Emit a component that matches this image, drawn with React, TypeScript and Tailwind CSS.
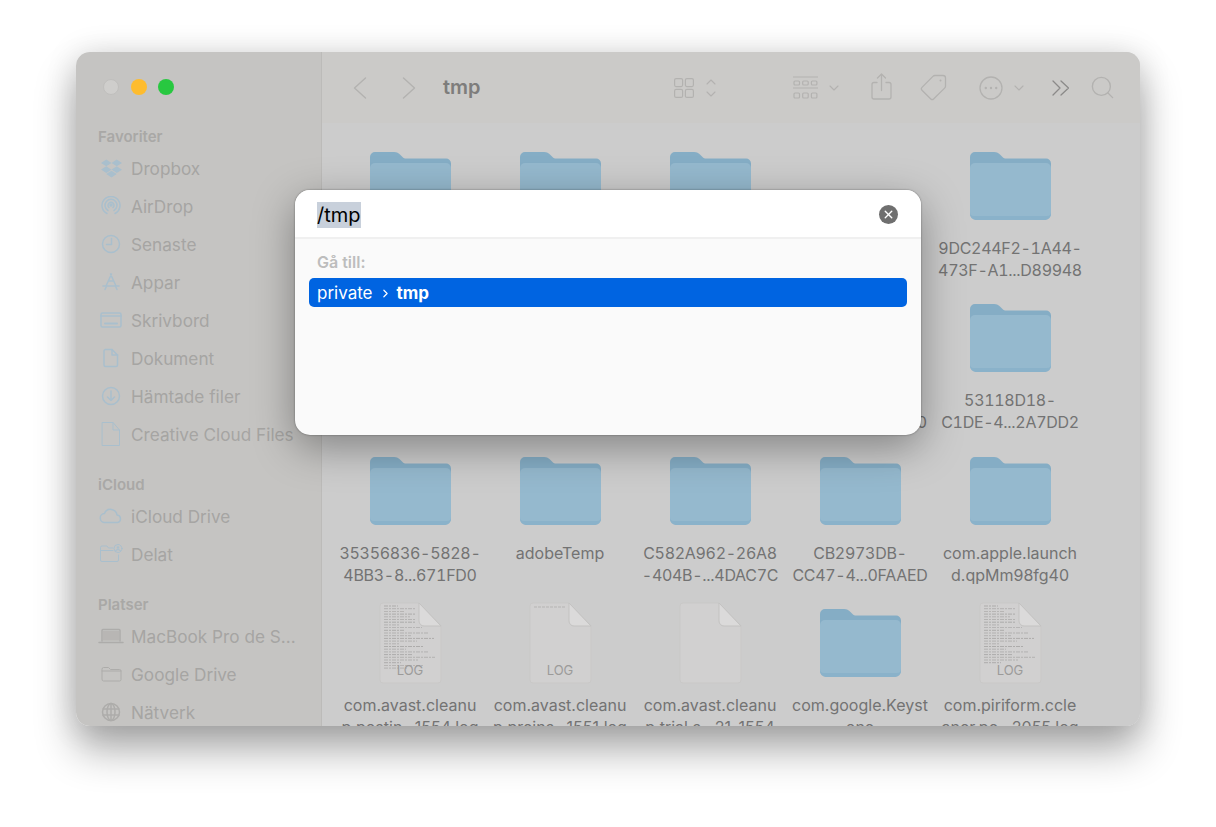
import type { ReactNode } from "react";
import { FaDropbox } from "react-icons/fa";
import { ChevronDown, ChevronRight, ChevronUp, Search, X } from "lucide-react";

const ic = "#a9bfcd";
const gr = "#adacaa";

const Svg = ({ w, h, children, color = ic }: { w: number; h: number; children: ReactNode; color?: string }) => (
    <svg width={w} height={h} viewBox={`0 0 ${w} ${h}`} fill="none" stroke={color} strokeWidth="1.5" strokeLinecap="round" strokeLinejoin="round">
        {children}
    </svg>
);

const sidebar = [
    {
        title: "Favoriter",
        items: [
            { name: "Dropbox", icon: <FaDropbox size={21} color={ic} /> },
            {
                name: "AirDrop",
                icon: <Svg w={20} h={20}>
                    <path d="M6 17.500a9 9 0 1 1 8 0" />
                    <path d="M7 14.500a6 6 0 1 1 6 0" />
                    <path d="M8 11.500a3 3 0 1 1 4 0" />
                    <circle cx="10" cy="9" r="1" fill={ic} />
                </Svg>,
            },
            {
                name: "Senaste",
                icon: <Svg w={20} h={20}>
                    <circle cx="10" cy="10" r="8.500" />
                    <path d="M10.500 4.500v6H5.500" />
                </Svg>,
            },
            {
                name: "Appar",
                icon: <Svg w={20} h={20}>
                    <path d="M10.500 2 5 14M9.500 2 15 14M2 14h16M8 9h4" />
                    <path d="M4 17.500l1.200-2.500M16 17.500 14.800 15" />
                </Svg>,
            },
            {
                name: "Skrivbord",
                icon: <Svg w={22} h={18}>
                    <rect x="1" y="2" width="20" height="14" rx="1.500" />
                    <path d="M1 5h20" />
                    <path d="M5 12.500h12" strokeWidth="2" />
                </Svg>,
            },
            {
                name: "Dokument",
                icon: <Svg w={16} h={20}>
                    <path d="M2.500 1.500h6.500l5.500 5.500v10a1.500 1.500 0 0 1-1.500 1.500H2.500a1.500 1.500 0 0 1-1.500-1.500V3a1.500 1.500 0 0 1 1.500-1.500z" />
                    <path d="M9 1.500V7h5.500" />
                </Svg>,
            },
            {
                name: "Hämtade filer",
                icon: <Svg w={20} h={20}>
                    <circle cx="10" cy="10" r="8.500" />
                    <path d="M10 5v9.500M6.500 11l3.500 3.500 3.500-3.500" />
                </Svg>,
            },
            {
                name: "Creative Cloud Files",
                icon: <Svg w={20} h={26}>
                    <path d="M1.500 1.500h10.500l6.500 7.500v15.500h-17z" strokeWidth="1" />
                    <path d="M12 1.500V9h6.500" strokeWidth="1" />
                </Svg>,
            },
        ],
    },
    {
        title: "iCloud",
        items: [
            {
                name: "iCloud Drive",
                icon: <Svg w={24} h={16}>
                    <path d="M6 14.500a4.500 4.500 0 0 1-.5-9 6.500 6.500 0 0 1 12.500 1.500 3.800 3.800 0 0 1 .5 7.500z" />
                </Svg>,
            },
            {
                name: "Delat",
                icon: <Svg w={24} h={20}>
                    <path d="M14 4H9.500L8 2H3a1.500 1.500 0 0 0-1.500 1.500V16A1.500 1.500 0 0 0 3 17.500h15a1.500 1.500 0 0 0 1.500-1.500v-5" strokeWidth="1" />
                    <path d="M1.500 6.500H14" strokeWidth="1" />
                    <circle cx="19" cy="4.500" r="4" strokeWidth="1" />
                    <circle cx="19" cy="3.500" r="1.300" fill={ic} stroke="none" />
                    <path d="M16.500 7c1-1.800 4-1.800 5 0" strokeWidth="1.200" />
                </Svg>,
            },
        ],
    },
    {
        title: "Platser",
        items: [
            {
                name: "MacBook Pro de S...",
                icon: <Svg w={26} h={16} color={gr}>
                    <path d="M4 13V2.500A1 1 0 0 1 5 1.500h16a1 1 0 0 1 1 1V13" />
                    <path d="M5 3h16v9.500H5z" fill={gr} stroke="none" opacity="0.55" />
                    <path d="M1 14.500h24" />
                </Svg>,
            },
            {
                name: "Google Drive",
                icon: <Svg w={21} h={16} color={gr}>
                    <path d="M1 3a1.500 1.500 0 0 1 1.500-1.500h5L9.500 3.500h9A1.500 1.500 0 0 1 20 5v8.500a1.500 1.500 0 0 1-1.500 1.500h-16A1.500 1.500 0 0 1 1 13.500z" strokeWidth="1" />
                    <path d="M1 5h19" strokeWidth="1" />
                </Svg>,
            },
            {
                name: "Nätverk",
                icon: <Svg w={20} h={20} color={gr}>
                    <circle cx="10" cy="10" r="8.500" />
                    <ellipse cx="10" cy="10" rx="4" ry="8.500" />
                    <path d="M2 7h16M2 13h16M10 1.500v17" />
                </Svg>,
            },
        ],
    },
];

const Folder = () => (
    <svg width="81" height="68" viewBox="0 0 81 68">
        <path d="M0 5a5 5 0 0 1 5-5h19c3 0 4.500 1 6.500 3l2 2c1 1 2 1.500 4 1.500H76a5 5 0 0 1 5 5V60a8 8 0 0 1-8 8H8a8 8 0 0 1-8-8z" fill="#85adc5" />
        <path d="M0 16a5 5 0 0 1 5-5h71a5 5 0 0 1 5 5v46a5 5 0 0 1-5 5H5a5 5 0 0 1-5-5z" fill="#95b9ce" />
        <path d="M0 60v2a6 6 0 0 0 6 6h69a6 6 0 0 0 6-6v-2a4 4 0 0 1-4 4H4a4 4 0 0 1-4-4z" fill="#8ab2ca" />
    </svg>
);

// y of each preview line in the log icons, they run wider below the page fold
const logLines = Array.from({ length: 24 }, (_, i) => 4 + i * 2.7);

const FileIcon = ({ kind }: { kind: "dense" | "top" | "blank" | "mid" }) => (
    <svg width="64" height="82" viewBox="0 0 64 82">
        <path d="M5 1h36l22 23v54a3 3 0 0 1-3 3H5a3 3 0 0 1-3-3V4a3 3 0 0 1 3-3z" fill="#d1d0d0" stroke="#c9c8c7" strokeWidth="1" />
        <path d="M41 1v18a5 5 0 0 0 5 5h17z" fill="#dbdada" stroke="#c3c2c1" strokeWidth="1" />
        {kind === "top" && <path d="M6 5h32" stroke="#b5b4b3" strokeWidth="1" strokeDasharray="3 1" />}
        {(kind === "dense" || kind === "mid") && logLines.map((y, i) => {
            const len = 14 + ((i * 23) % 40);
            const end = y < 24 ? Math.min(6 + len, 37) : Math.min(6 + len, 58);
            return y < 62 || kind === "dense"
                ? <path key={y} d={`M6 ${y}H${end}`} stroke="#a3a2a1" strokeWidth="0.800" strokeDasharray="4 1 2 1" opacity={i % 3 ? 0.8 : 1} />
                : null;
        })}
        {kind !== "blank" && (
            <text x="32" y="73" textAnchor="middle" fontSize="13" fill="#9c9b9a" fontFamily="Inter, sans-serif">LOG</text>
        )}
    </svg>
);

const grid: { icon: ReactNode; lines: string[] }[] = [
    { icon: <Folder />, lines: [] },
    { icon: <Folder />, lines: [] },
    { icon: <Folder />, lines: [] },
    { icon: null, lines: [] },
    { icon: <Folder />, lines: ["9DC244F2-1A44-", "473F-A1...D89948"] },
    { icon: <Folder />, lines: [] },
    { icon: <Folder />, lines: [] },
    { icon: <Folder />, lines: [] },
    { icon: null, lines: ["", "4B60-8...F27AD0"] },
    { icon: <Folder />, lines: ["53118D18-", "C1DE-4...2A7DD2"] },
    { icon: <Folder />, lines: ["35356836-5828-", "4BB3-8...671FD0"] },
    { icon: <Folder />, lines: ["adobeTemp"] },
    { icon: <Folder />, lines: ["C582A962-26A8", "-404B-...4DAC7C"] },
    { icon: <Folder />, lines: ["CB2973DB-", "CC47-4...0FAAED"] },
    { icon: <Folder />, lines: ["com.apple.launch", "d.qpMm98fg40"] },
    { icon: <FileIcon kind="dense" />, lines: ["com.avast.cleanu", "p.postin...1554.log"] },
    { icon: <FileIcon kind="top" />, lines: ["com.avast.cleanu", "p.preins...1551.log"] },
    { icon: <FileIcon kind="blank" />, lines: ["com.avast.cleanu", "p.trial.s...21-1554"] },
    { icon: <Folder />, lines: ["com.google.Keyst", "one"] },
    { icon: <FileIcon kind="mid" />, lines: ["com.piriform.ccle", "aner.pe...2055.log"] },
];

const App = () => {
    return <div className="h-[827px] w-[1216px] bg-white pt-[52px] pl-[76px] overflow-hidden font-['Inter',sans-serif]">
        <div className="relative w-[1064px] h-[674px] rounded-[14px] shadow-[0_24px_42px_rgba(0,0,0,0.32),0_2px_32px_rgba(0,0,0,0.14)]">
            <div className="w-full h-full flex rounded-[14px] overflow-hidden">

                {/* Sidebar */}
                <div className="w-[246px] shrink-0 bg-[#c5c4c2] border-r border-[#bcbbb9] pl-[22px] pt-[27px]">
                    <div className="flex gap-[11.5px] ml-[5px] mb-[31px]">
                        <div className="w-4 h-4 rounded-full bg-[#cfcecc] border border-[#c0bfbd]"></div>
                        <div className="w-4 h-4 rounded-full bg-[#febc2e]"></div>
                        <div className="w-4 h-4 rounded-full bg-[#28c840]"></div>
                    </div>
                    {sidebar.map((section, index) => <div key={index} className="mb-[21px]">
                        <div className="h-5 mb-[3px] pt-[1px] text-[15px] leading-5 font-semibold text-[#a9a8a6]">{section.title}</div>
                        {section.items.map((item) => <div key={item.name} className="h-[38px] flex items-center">
                            <div className="w-[26px] flex justify-center shrink-0">{item.icon}</div>
                            <div className="ml-[7px] pt-[1px] text-[17.2px] text-[#a6a5a3] whitespace-nowrap">{item.name}</div>
                        </div>)}
                    </div>)}
                </div>

                <div className="flex-1 flex flex-col min-w-0 bg-[#cccccc]">

                    {/* Toolbar */}
                    <div className="h-[71px] shrink-0 bg-[#cbcac8] flex items-center text-[#b3b2b0]">
                        <svg className="ml-[31px]" width="14" height="22" viewBox="0 0 14 22" fill="none" stroke="currentColor" strokeWidth="1.400" strokeLinecap="round" strokeLinejoin="round">
                            <path d="M12.500 1 1.500 11l11 10" />
                        </svg>
                        <svg className="ml-[35px]" width="14" height="22" viewBox="0 0 14 22" fill="none" stroke="currentColor" strokeWidth="1.400" strokeLinecap="round" strokeLinejoin="round">
                            <path d="M1.500 1l11 10-11 10" />
                        </svg>
                        <div className="ml-[27px] pb-[2px] text-[20px] font-semibold text-[#7e7d7c]">tmp</div>
                        <svg className="ml-[193px]" width="20" height="20" viewBox="0 0 20 20" fill="none" stroke="currentColor" strokeWidth="1.200">
                            <rect x="0.600" y="0.600" width="8" height="8" rx="1.500" />
                            <rect x="11.400" y="0.600" width="8" height="8" rx="1.500" />
                            <rect x="0.600" y="11.400" width="8" height="8" rx="1.500" />
                            <rect x="11.400" y="11.400" width="8" height="8" rx="1.500" />
                        </svg>
                        <div className="ml-[9px] flex flex-col -space-y-[4px]">
                            <ChevronUp size={16} strokeWidth={1.6} />
                            <ChevronDown size={16} strokeWidth={1.6} />
                        </div>
                        <svg className="ml-[74px]" width="25" height="24" viewBox="0 0 25 24" fill="none" stroke="currentColor" strokeWidth="1.200">
                            <path d="M0 1h25M0 12h25" />
                            <rect x="1" y="5" width="5.500" height="4" rx="1" />
                            <rect x="9.700" y="5" width="5.500" height="4" rx="1" />
                            <rect x="18.400" y="5" width="5.500" height="4" rx="1" />
                            <rect x="1" y="17" width="5.500" height="5" rx="1" />
                            <rect x="9.700" y="17" width="5.500" height="5" rx="1" />
                            <rect x="18.400" y="17" width="5.500" height="5" rx="1" />
                        </svg>
                        <ChevronDown size={16} strokeWidth={1.7} className="ml-[8px]" />
                        <svg className="ml-[29px] mb-[2px]" width="21" height="27" viewBox="0 0 21 27" fill="none" stroke="currentColor" strokeWidth="1.300" strokeLinecap="round" strokeLinejoin="round">
                            <path d="M6 9.500H3a2 2 0 0 0-2 2V24a2 2 0 0 0 2 2h15a2 2 0 0 0 2-2V11.500a2 2 0 0 0-2-2h-3" />
                            <path d="M10.500 17.500V1.500M6.500 5l4-4 4 4" />
                        </svg>
                        <svg className="ml-[28px]" width="27" height="27" viewBox="0 0 27 27" fill="none" stroke="currentColor" strokeWidth="1.300" strokeLinejoin="round">
                            <path d="M15 1.500h8a2.500 2.500 0 0 1 2.500 2.500v8a3 3 0 0 1-.9 2.100L13.600 25a2 2 0 0 1-2.800 0L2 16.200a2 2 0 0 1 0-2.800L12.900 2.400A3 3 0 0 1 15 1.500z" />
                            <circle cx="20.500" cy="6.500" r="1" fill="currentColor" stroke="none" />
                        </svg>
                        <svg className="ml-[32px]" width="24" height="24" viewBox="0 0 24 24" fill="none" stroke="currentColor" strokeWidth="1.300">
                            <circle cx="12" cy="12" r="11" />
                            <circle cx="6.800" cy="12" r="1.200" fill="currentColor" stroke="none" />
                            <circle cx="12" cy="12" r="1.200" fill="currentColor" stroke="none" />
                            <circle cx="17.200" cy="12" r="1.200" fill="currentColor" stroke="none" />
                        </svg>
                        <ChevronDown size={16} strokeWidth={1.7} className="ml-[8px]" />
                        <svg className="ml-[25px] text-[#8b8a89]" width="18" height="16" viewBox="0 0 18 16" fill="none" stroke="currentColor" strokeWidth="1.300" strokeLinecap="round" strokeLinejoin="round">
                            <path d="M1 1l7 7-7 7M9 1l7.500 7L9 15" />
                        </svg>
                        <Search size={27} strokeWidth={1.2} className="ml-[19px]" />
                    </div>

                    {/* Files */}
                    <div className="flex-1 min-h-0 overflow-hidden pl-[13px] pt-[22px] grid grid-cols-[repeat(5,150px)] auto-rows-[152.33px] bg-[#cccccc]">
                        {grid.map((item, index) => <div key={index} className="flex flex-col items-center">
                            <div className="h-[82px] flex items-center justify-center shrink-0">{item.icon}</div>
                            <div className="mt-[10px] w-[150px] text-center text-[16px] leading-[22px] text-[#737373] whitespace-nowrap">
                                {item.lines.map((line, i) => <div key={i} className={/^[0-9A-F.-]+$/.test(line) ? "h-[22px] tabular-nums tracking-[-0.3px]" : "h-[22px]"}>{line}</div>)}
                            </div>
                        </div>)}
                    </div>
                </div>
            </div>

            {/* Go to folder dialog */}
            <div className="absolute left-[219px] top-[138px] w-[626px] h-[245px] rounded-[15px] bg-[#fafafa] overflow-hidden shadow-[0_12px_42px_rgba(0,0,0,0.36),0_0_2px_rgba(0,0,0,0.45)] flex flex-col">
                <div className="h-[49px] shrink-0 bg-white border-b-2 border-[#f0f0f0] flex items-center justify-between pl-[22px] pr-[23px] pt-[2px]">
                    <span className="bg-[#c8d0db] text-[20px] leading-[26px] text-black">/tmp</span>
                    <div className="w-[19px] h-[19px] rounded-full bg-[#6f6f6f] flex items-center justify-center">
                        <X size={13} strokeWidth={2.6} color="white" />
                    </div>
                </div>
                <div className="pl-[22px] pt-[13px] h-[39px] shrink-0 text-[16px] leading-5 font-semibold text-[#bdbdbd]">Gå till:</div>
                <div className="mx-[14px] h-[29px] rounded-[5px] bg-[#0064e1] flex items-center pl-[8px] pt-[2px] text-white text-[17px]">
                    private
                    <ChevronRight size={13} strokeWidth={2.2} className="ml-[6px]" />
                    <span className="ml-[5px] font-bold">tmp</span>
                </div>
            </div>
        </div>
    </div>
}

export default App
